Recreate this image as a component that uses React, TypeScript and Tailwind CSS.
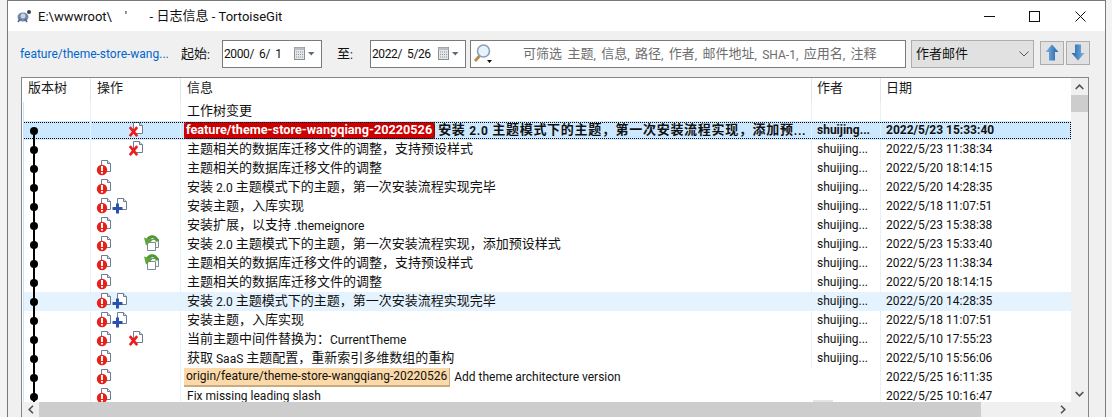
type Row = {
  msg: string;
  author?: string;
  date?: string;
  mod?: boolean;
  add?: boolean;
  del?: boolean;
  rev?: boolean;
  bold?: boolean;
  selected?: boolean;
  hover?: boolean;
  tag?: string;
  tagKind?: "red" | "orange";
};

const rows: Row[] = [
  { msg: "安装 2.0 主题模式下的主题，第一次安装流程实现，添加预...", author: "shuijing...", date: "2022/5/23 15:33:40", del: true, bold: true, selected: true, tag: "feature/theme-store-wangqiang-20220526", tagKind: "red" },
  { msg: "主题相关的数据库迁移文件的调整，支持预设样式", author: "shuijing...", date: "2022/5/23 11:38:34", del: true },
  { msg: "主题相关的数据库迁移文件的调整", author: "shuijing...", date: "2022/5/20 18:14:15", mod: true },
  { msg: "安装 2.0 主题模式下的主题，第一次安装流程实现完毕", author: "shuijing...", date: "2022/5/20 14:28:35", mod: true },
  { msg: "安装主题，入库实现", author: "shuijing...", date: "2022/5/18 11:07:51", mod: true, add: true },
  { msg: "安装扩展，以支持 .themeignore", author: "shuijing...", date: "2022/5/23 15:38:38", mod: true },
  { msg: "安装 2.0 主题模式下的主题，第一次安装流程实现，添加预设样式", author: "shuijing...", date: "2022/5/23 15:33:40", mod: true, rev: true },
  { msg: "主题相关的数据库迁移文件的调整，支持预设样式", author: "shuijing...", date: "2022/5/23 11:38:34", mod: true, rev: true },
  { msg: "主题相关的数据库迁移文件的调整", author: "shuijing...", date: "2022/5/20 18:14:15", mod: true },
  { msg: "安装 2.0 主题模式下的主题，第一次安装流程实现完毕", author: "shuijing...", date: "2022/5/20 14:28:35", mod: true, add: true, hover: true },
  { msg: "安装主题，入库实现", author: "shuijing...", date: "2022/5/18 11:07:51", mod: true, add: true },
  { msg: "当前主题中间件替换为：CurrentTheme", author: "shuijing...", date: "2022/5/10 17:55:23", mod: true, del: true },
  { msg: "获取 SaaS 主题配置，重新索引多维数组的重构", author: "shuijing...", date: "2022/5/10 15:56:06", mod: true },
  { msg: "Add theme architecture version", date: "2022/5/25 16:11:35", mod: true, tag: "origin/feature/theme-store-wangqiang-20220526", tagKind: "orange" },
  { msg: "Fix missing leading slash", date: "2022/5/25 10:16:47", mod: true },
];

// the original mixes a narrow latin face with 13px chinese, so split the runs
const Mixed = ({ text, latin = "text-[12px]" }: { text: string; latin?: string }) => (
  <span className="whitespace-pre">
    {text.split(/([\u3000-\u303f\u4e00-\u9fff\uff00-\uffef]+)/).map((part, i) =>
      i % 2 === 1 ? (
        <span key={i} className="relative -top-px font-['Noto_Sans_CJK_SC',sans-serif] text-[13px]">{part}</span>
      ) : (
        <span key={i} className={latin}>{part}</span>
      )
    )}
  </span>
);

const Doc = () => (
  <>
    <path d="M5.5 .5H11.5L14.5 3.5V11.5H5.5Z" fill="#fff" stroke="#6b7c93" />
    <path d="M11.5 .5V3.5H14.5" fill="#dde3ea" stroke="#6b7c93" />
  </>
);

const ModIcon = () => (
  <svg width="16" height="16" viewBox="0 0 16 16">
    <Doc />
    <circle cx="6" cy="10" r="5.2" fill="#e8201a" />
    <rect x="5" y="6" width="2" height="5" fill="#fff" />
    <rect x="5" y="12" width="2" height="1.6" fill="#fff" />
  </svg>
);

const AddIcon = () => (
  <svg width="16" height="16" viewBox="0 0 16 16">
    <Doc />
    <path d="M4 5.5H7V9H10.5V12H7V15.5H4V12H.5V9H4Z" fill="#2a50b0" />
  </svg>
);

const DelIcon = () => (
  <svg width="16" height="16" viewBox="0 0 16 16">
    <Doc />
    <path d="M1.8 5.2L9.2 14.2M9.2 5.2L1.8 14.2" stroke="#ee1c1c" strokeWidth="2.6" />
  </svg>
);

const RevIcon = () => (
  <svg width="16" height="16" viewBox="0 0 16 16" className="-mt-px">
    <path d="M6.5 4.5H14.5V12.5H6.5Z" fill="#f6f6f6" stroke="#7d8a99" />
    <path d="M3.5 7.5H11.5V15.5H3.5Z" fill="#fff" stroke="#7d8a99" />
    <path d="M13.2 6.5C12.8 3 10 1.6 7.5 1.8C5.8 2 4.6 3 4 4.5" fill="none" stroke="#4f9a30" strokeWidth="3.2" />
    <path d="M0 2.5L8.5 5.2L2 10.5Z" fill="#5fa53a" />
  </svg>
);

const CalendarDrop = () => (
  <svg width="21" height="14" viewBox="0 0 21 14" className="shrink-0">
    <rect x=".5" y=".5" width="10" height="12" fill="#e4e6e8" stroke="#8a8f96" />
    <rect x=".5" y=".5" width="10" height="2.5" fill="#b9bec5" />
    <path d="M2 5H9M2 7.5H9M2 10H9" stroke="#8f959d" strokeDasharray="1 1" />
    <path d="M14 5H20.5L17.2 8.5Z" fill="#5b6b80" />
  </svg>
);

const DateBox = ({ text, className }: { text: string; className: string }) => (
  <div className={`flex h-[28px] shrink-0 items-center justify-between border border-[#7a7a7a] bg-white pl-[1px] pr-[6px] tracking-[-0.4px] ${className}`}>
    <Mixed text={text} />
    <CalendarDrop />
  </div>
);

const ArrowBtn = ({ up }: { up?: boolean }) => (
  <div className="flex h-[24px] w-[24px] items-center justify-center border border-[#adadad] bg-[#e1e1e1]">
    <svg width="14" height="17" viewBox="0 0 14 17" className={up ? "" : "rotate-180"}>
      <defs>
        <linearGradient id={up ? "au" : "ad"} x1="0" x2="1" y1="0" y2="0">
          <stop offset="0" stopColor="#7fb5e2" />
          <stop offset="1" stopColor="#1f63a8" />
        </linearGradient>
      </defs>
      <path d="M7 .5L13.5 8H10V16.5H4V8H.5Z" fill={`url(#${up ? "au" : "ad"})`} />
    </svg>
  </div>
);

const Header = () => (
  <div className="flex h-[24px] shrink-0 leading-[20px] text-[#1a1a1a]">
    <div className="w-[69px] border-r border-[#e5e5e5] pl-[6px]"><Mixed text="版本树" /></div>
    <div className="w-[90px] border-r border-[#e5e5e5] pl-[6px]"><Mixed text="操作" /></div>
    <div className="w-[631px] border-r border-[#e5e5e5] pl-[6px]"><Mixed text="信息" /></div>
    <div className="w-[69px] border-r border-[#e5e5e5] pl-[5px]"><Mixed text="作者" /></div>
    <div className="flex-1 pl-[5px]"><Mixed text="日期" /></div>
  </div>
);

const Actions = ({ row }: { row: Row }) => (
  <div className="flex h-full w-[90px] shrink-0 items-start border-r border-[#e5f1fb] pl-[5px] pt-[1px]">
    <div className="w-[16px]">{row.mod && <ModIcon />}</div>
    <div className="w-[16px]">{row.add && <AddIcon />}</div>
    <div className="w-[16px]">{row.del && <DelIcon />}</div>
    <div className="w-[16px]">{row.rev && <RevIcon />}</div>
  </div>
);

const Graph = ({ first }: { first?: boolean }) => (
  <div className="relative h-full w-[68px] shrink-0 border-x border-l-[#cfe3f7] border-r-[#e5f1fb]">
    <div className={`absolute bottom-0 left-[9px] w-[2px] bg-black ${first ? "top-1/2" : "top-0"}`} />
    <div className="absolute left-[6px] top-[6px] h-[8px] w-[8px] rounded-full bg-black" />
  </div>
);

const LogRow = ({ row, first, last }: { row: Row; first: boolean; last: boolean }) => {
  const bg = row.selected ? "bg-[#cce8ff]" : row.hover ? "bg-[#e5f3ff]" : "";
  const msgEdge = row.author ? "border-[#e5f1fb]" : "border-transparent";
  return (
    <div className={`relative ml-px flex h-[19px] shrink-0 leading-[19px] text-[#111] ${bg}`}>
      {row.selected && (
        <div className="pointer-events-none absolute inset-x-0 inset-y-px border border-dotted border-black" />
      )}
      <Graph first={first} />
      <Actions row={row} />
      <div className={`flex w-[631px] shrink-0 items-center whitespace-nowrap border-r pl-[3px] ${msgEdge} ${row.bold ? "font-bold" : ""}`}>
        {row.tag && row.tagKind === "red" && (
          <span className="mr-[3px] flex h-[17px] items-center rounded-[3px] border-b border-r border-[#6e1010] bg-[#cc0000] px-[2px] leading-[17px] text-white">
            <Mixed text={row.tag} latin="text-[12.7px]" />
          </span>
        )}
        {row.tag && row.tagKind === "orange" && (
          <span className="mr-[4px] flex h-[19px] items-center border-b-2 border-r border-[#c9ab80] bg-[#fcd9a8] px-[2px] leading-[17px]">
            <Mixed text={row.tag} />
          </span>
        )}
        <span className={`${row.tag ? "" : "pl-[3px]"} ${row.bold ? "tracking-[0.7px]" : ""}`}>
          <Mixed text={row.msg} />
        </span>
      </div>
      <div className={`relative w-[68px] shrink-0 whitespace-nowrap pl-[5px] ${row.bold ? "font-bold" : ""}`}>
        <Mixed text={row.author ?? ""} />
        {last && <div className="absolute left-[1px] top-[13px] h-[4px] w-[20px] bg-[#e5e5e5]" />}
      </div>
      <div className={`flex-1 whitespace-nowrap border-l border-[#e5f1fb] pl-[5px] ${row.bold ? "font-bold" : ""}`}>
        <Mixed text={row.date ?? ""} />
      </div>
    </div>
  );
};

export default function App() {
  return (
    <div className="h-[417px] w-[1112px] overflow-hidden bg-[#f3f3f3] pl-[7px] pr-[6px] font-['Roboto','Noto_Sans_CJK_SC',sans-serif] text-[12px]">
      <div className="flex h-[417px] flex-col border-x border-t border-[#7a7a7a] bg-[#f0f0f0]">
        {/* title bar */}
        <div className="flex h-[30px] shrink-0 items-center bg-white pl-[8px] text-[#111]">
          <svg width="16" height="16" viewBox="0 0 16 16" className="mr-[6px] shrink-0">
            <ellipse cx="7" cy="9" rx="5.5" ry="4.5" fill="#6f87a8" />
            <circle cx="7" cy="8" r="2.5" fill="#c8d4e4" />
            <circle cx="13" cy="4" r="2" fill="#37465c" />
            <path d="M2 14L4 11M11 14L9 11" stroke="#4f6280" strokeWidth="1.5" />
          </svg>
          <Mixed latin="text-[13px]" text={"E:\\wwwroot\\    '       - 日志信息 - TortoiseGit"} />
          <div className="ml-auto flex items-center pr-[19px]">
            <svg width="11" height="11" viewBox="0 0 11 11" className="mr-[34px]">
              <path d="M0 5.5H11" stroke="#111" />
            </svg>
            <svg width="11" height="11" viewBox="0 0 11 11" className="mr-[35px]">
              <rect x=".5" y=".5" width="10" height="10" fill="none" stroke="#111" />
            </svg>
            <svg width="11" height="11" viewBox="0 0 11 11">
              <path d="M.5 .5L10.5 10.5M10.5 .5L.5 10.5" stroke="#111" />
            </svg>
          </div>
        </div>

        {/* filter bar */}
        <div className="flex h-[46px] shrink-0 items-center pl-[12px] text-[#111]">
          <a className="w-[161px] shrink-0 whitespace-nowrap text-[#0066cc]">feature/theme-store-wang...</a>
          <span className="w-[41px] shrink-0"><Mixed text="起始:" /></span>
          <DateBox text="2000/  6/  1" className="w-[100px]" />
          <span className="ml-[15px] w-[33px] shrink-0"><Mixed text="至:" /></span>
          <DateBox text="2022/  5/26" className="w-[96px]" />
          <div className="relative ml-[4px] flex h-[28px] w-[436px] shrink-0 items-center border border-[#7a7a7a] bg-white pl-[52px] text-[#6d6d6d] [word-spacing:2.4px]">
            <svg width="20" height="24" viewBox="0 0 20 24" className="absolute left-[1px] top-[1px]">
              <circle cx="11.5" cy="9" r="6" fill="#e8f2fb" stroke="#8aa0b8" strokeWidth="1.6" />
              <path d="M7.5 14L3 19" stroke="#b88a4a" strokeWidth="2.8" />
              <path d="M15 18H20L17.5 21Z" fill="#111" />
            </svg>
            <Mixed text="可筛选 主题, 信息, 路径, 作者, 邮件地址, SHA-1, 应用名, 注释" />
          </div>
          <div className="ml-[5px] flex h-[28px] w-[123px] shrink-0 items-center justify-between border border-[#adadad] bg-[#e1e1e1] pl-[4px] pr-[4px]">
            <Mixed text="作者邮件" />
            <svg width="10" height="6" viewBox="0 0 10 6">
              <path d="M.5 .5L5 5L9.5 .5" fill="none" stroke="#555" />
            </svg>
          </div>
          <div className="mb-[3px] ml-[6px] flex gap-[2px]">
            <ArrowBtn up />
            <ArrowBtn />
          </div>
        </div>

        {/* log list */}
        <div className="ml-[13px] flex h-[340px] w-[1068px] shrink-0 flex-col border-x border-t border-[#828790] bg-white">
          <div className="flex min-h-0 flex-1">
            <div className="flex min-w-0 flex-1 flex-col overflow-hidden">
              <Header />
              <div className="ml-px flex h-[19px] shrink-0 leading-[17px] text-[#111]">
                <div className="w-[68px] border-x border-l-[#cfe3f7] border-r-[#e5f1fb]" />
                <div className="w-[90px] border-r border-[#e5f1fb]" />
                <div className="w-[631px] border-r border-[#e5f1fb] pl-[6px]"><Mixed text="工作树变更" /></div>
                <div className="w-[69px] border-r border-[#e5f1fb]" />
              </div>
              <div className="flex min-h-0 flex-1 flex-col overflow-hidden">
                {rows.map((row, i) => (
                  <LogRow key={i} row={row} first={i === 0} last={i === rows.length - 1} />
                ))}
              </div>
            </div>
            {/* vertical scrollbar */}
            <div className="flex w-[17px] shrink-0 flex-col bg-[#f0f0f0]">
              <div className="flex h-[17px] items-center justify-center">
                <svg width="9" height="6" viewBox="0 0 9 6">
                  <path d="M.7 5L4.5 1.2L8.3 5" fill="none" stroke="#505050" strokeWidth="1.6" />
                </svg>
              </div>
              <div className="h-[17px] bg-[#cdcdcd]" />
              <div className="flex-1" />
              <div className="flex h-[17px] items-center justify-center">
                <svg width="9" height="6" viewBox="0 0 9 6">
                  <path d="M.7 1L4.5 4.8L8.3 1" fill="none" stroke="#505050" strokeWidth="1.6" />
                </svg>
              </div>
            </div>
          </div>
          {/* horizontal scrollbar */}
          <div className="flex h-[15px] shrink-0 bg-[#f0f0f0]">
            <div className="flex w-[17px] items-center justify-center">
              <svg width="6" height="9" viewBox="0 0 6 9">
                <path d="M5 .7L1.2 4.5L5 8.3" fill="none" stroke="#505050" strokeWidth="1.6" />
              </svg>
            </div>
            <div className="w-[942px] bg-[#cdcdcd]" />
            <div className="flex-1" />
            <div className="flex w-[17px] items-center justify-center">
              <svg width="6" height="9" viewBox="0 0 6 9">
                <path d="M1 .7L4.8 4.5L1 8.3" fill="none" stroke="#505050" strokeWidth="1.6" />
              </svg>
            </div>
            <div className="w-[17px]" />
          </div>
        </div>
      </div>
    </div>
  );
}
